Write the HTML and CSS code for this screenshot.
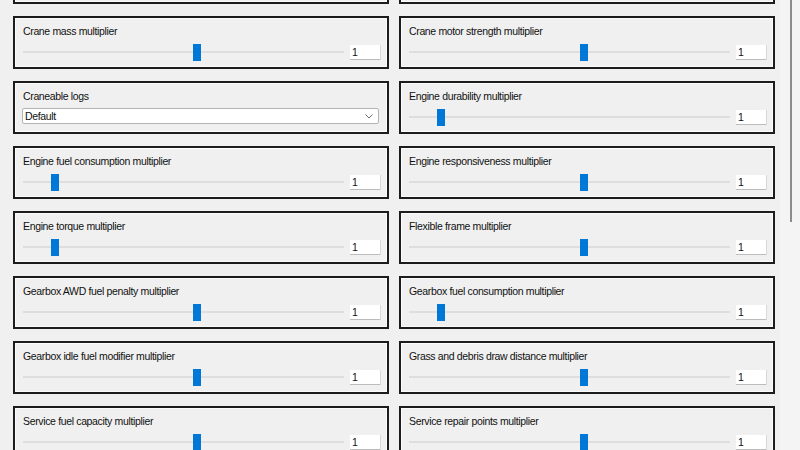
FILE: index.html
```html
<!DOCTYPE html>
<html>
  <head>
    <title>Game Settings</title>
    <link rel="stylesheet" href="styles.css">
  </head>
  <body>
    <div class="settings">
      <div class="grid">
        <!-- row above, scrolled out of view -->
        <div class="panel"></div>
        <div class="panel"></div>

        <div class="panel">
          <span class="label">Crane mass multiplier</span>
          <div class="row">
            <div class="slider"><div class="thumb" style="left: 53%"></div></div>
            <div class="value">1</div>
          </div>
        </div>
        <div class="panel">
          <span class="label">Crane motor strength multiplier</span>
          <div class="row">
            <div class="slider"><div class="thumb" style="left: 53.3%"></div></div>
            <div class="value">1</div>
          </div>
        </div>

        <div class="panel">
          <span class="label">Craneable logs</span>
          <div class="dropdown">
            <span>Default</span>
            <svg width="8" height="5" viewBox="0 0 8 5" fill="none" stroke="#6b6b6b" stroke-width="1">
              <polyline points="0.5 0.5 4 4 7.5 0.5" />
            </svg>
          </div>
        </div>
        <div class="panel">
          <span class="label">Engine durability multiplier</span>
          <div class="row">
            <div class="slider"><div class="thumb" style="left: 8.7%"></div></div>
            <div class="value">1</div>
          </div>
        </div>

        <div class="panel">
          <span class="label">Engine fuel consumption multiplier</span>
          <div class="row">
            <div class="slider"><div class="thumb" style="left: 8.7%"></div></div>
            <div class="value">1</div>
          </div>
        </div>
        <div class="panel">
          <span class="label">Engine responsiveness multiplier</span>
          <div class="row">
            <div class="slider"><div class="thumb" style="left: 53.3%"></div></div>
            <div class="value">1</div>
          </div>
        </div>

        <div class="panel">
          <span class="label">Engine torque multiplier</span>
          <div class="row">
            <div class="slider"><div class="thumb" style="left: 8.7%"></div></div>
            <div class="value">1</div>
          </div>
        </div>
        <div class="panel">
          <span class="label">Flexible frame multiplier</span>
          <div class="row">
            <div class="slider"><div class="thumb" style="left: 53.3%"></div></div>
            <div class="value">1</div>
          </div>
        </div>

        <div class="panel">
          <span class="label">Gearbox AWD fuel penalty multiplier</span>
          <div class="row">
            <div class="slider"><div class="thumb" style="left: 53%"></div></div>
            <div class="value">1</div>
          </div>
        </div>
        <div class="panel">
          <span class="label">Gearbox fuel consumption multiplier</span>
          <div class="row">
            <div class="slider"><div class="thumb" style="left: 8.7%"></div></div>
            <div class="value">1</div>
          </div>
        </div>

        <div class="panel">
          <span class="label">Gearbox idle fuel modifier multiplier</span>
          <div class="row">
            <div class="slider"><div class="thumb" style="left: 53%"></div></div>
            <div class="value">1</div>
          </div>
        </div>
        <div class="panel">
          <span class="label">Grass and debris draw distance multiplier</span>
          <div class="row">
            <div class="slider"><div class="thumb" style="left: 53.3%"></div></div>
            <div class="value">1</div>
          </div>
        </div>

        <div class="panel">
          <span class="label">Service fuel capacity multiplier</span>
          <div class="row">
            <div class="slider"><div class="thumb" style="left: 53%"></div></div>
            <div class="value">1</div>
          </div>
        </div>
        <div class="panel">
          <span class="label">Service repair points multiplier</span>
          <div class="row">
            <div class="slider"><div class="thumb" style="left: 53.3%"></div></div>
            <div class="value">1</div>
          </div>
        </div>
      </div>
    </div>

    <div class="scrollbar">
      <div class="scroll-thumb"></div>
    </div>
  </body>
</html>
```

FILE: styles.css
```css
body {
  margin: 0;
  padding: 0;
  font-family: "Liberation Sans", Arial, sans-serif;
  font-size: 10.5px;
  letter-spacing: -0.35px;
  background: #f0f0f0;
  color: #111;
  height: 100vh;
  overflow: hidden;
  display: flex;
}

.settings {
  flex: 1;
  overflow: hidden;
  padding-left: 13px;
}

/* scrolled down a bit, so the first row is cut off at the top */
.grid {
  display: grid;
  grid-template-columns: 376px 376px;
  column-gap: 10px;
  row-gap: 12px;
  margin-top: -49px;
}

.panel {
  box-sizing: border-box;
  height: 53px;
  border: 2px solid #1c1c1c;
  box-shadow: inset 0 0 0 1px #fbfbfb;
  padding: 6px 7px 0 8px;
  display: flex;
  flex-direction: column;
}

.label {
  line-height: 15px;
  white-space: nowrap;
}

.row {
  margin-top: 5px;
  height: 17px;
  display: flex;
  gap: 6px;
}

.slider {
  flex: 1;
  position: relative;
}

.slider::before {
  content: "";
  position: absolute;
  left: 0;
  right: 0;
  top: 7px;
  height: 2px;
  background: #dedede;
}

.thumb {
  position: absolute;
  top: 0;
  width: 8px;
  height: 17px;
  background: #0078d7;
}

.value {
  box-sizing: border-box;
  width: 30px;
  height: 15px;
  margin-top: 1px;
  padding-left: 2px;
  line-height: 14px;
  background: #fff;
  border-bottom: 1px solid #bcbcbc;
  box-shadow: 1px 0 0 #d8d8d8;
}

.dropdown {
  box-sizing: border-box;
  margin-top: 4px;
  margin-left: -1px;
  margin-right: 1px;
  height: 16px;
  padding: 0 5px 0 2px;
  background: #fff;
  border: 1px solid #b4b4b4;
  border-radius: 2px;
  display: flex;
  align-items: center;
  justify-content: space-between;
  line-height: 14px;
}

.scrollbar {
  width: 20px;
  background: #f4f4f4;
  display: flex;
  justify-content: center;
}

.scroll-thumb {
  width: 2px;
  height: 222px;
  margin-left: 1px;
  background: #8c8c8c;
}
```
